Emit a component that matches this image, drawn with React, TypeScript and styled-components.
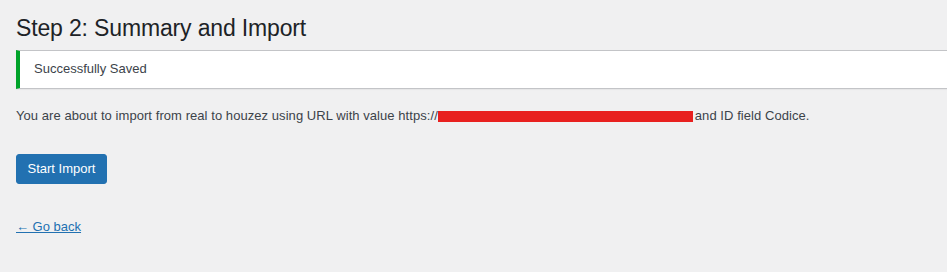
import React from "react";
import styled, { createGlobalStyle } from "styled-components";

const Global = createGlobalStyle`
  html, body { margin: 0; padding: 0; background: #f0f0f1; overflow: hidden; }
  body { font-family: "Liberation Sans", Arial, sans-serif; color: #3c434a; font-size: 13px; }
`;

const Wrap = styled.div`
  padding: 0 0 0 16px;
  width: 960px;
`;

const Title = styled.h1`
  margin: 0;
  padding: 14px 0 6px;
  font-size: 23px;
  font-weight: 400;
  line-height: 1.3;
  letter-spacing: -0.15px;
  color: #1d2327;
`;

const Notice = styled.div`
  background: #fff;
  border: 1px solid #c3c4c7;
  border-left: 4px solid #00a32a;
  box-shadow: 0 1px 1px rgba(0, 0, 0, 0.04);
  padding: 1px 12px;
  margin: 0 0 17px;
`;

const NoticeText = styled.p`
  margin: 0.5em 0;
  padding: 2px;
  line-height: 1.4;
  font-size: 13px;
`;

const Text = styled.p`
  margin: 0;
  line-height: 1.5;
  font-size: 13px;
  letter-spacing: 0.06px;
`;

const Redacted = styled.span`
  display: inline-block;
  width: 255px;
  height: 11px;
  background: #e8201f;
  vertical-align: -2px;
  margin-right: 2px;
`;

const Button = styled.button`
  margin-top: 28px;
  display: inline-block;
  background: #2271b1;
  border: 1px solid #2271b1;
  color: #fff;
  border-radius: 3px;
  font-family: inherit;
  font-size: 13px;
  line-height: 2.15384615;
  min-height: 30px;
  padding: 0 10px 0 10px;
  width: 91px;
  cursor: pointer;
`;

const Back = styled.a`
  display: inline-block;
  margin-top: 35px;
  color: #2271b1;
  text-decoration: underline;
  font-size: 13px;
`;

export default function App() {
  return (
    <>
      <Global />
      <Wrap>
        <Title>Step 2: Summary and Import</Title>
        <Notice>
          <NoticeText>Successfully Saved</NoticeText>
        </Notice>
        <Text>
          You are about to import from real to houzez using URL with value https://
          <Redacted aria-hidden="true" />
          and ID field Codice.
        </Text>
        <div>
          <Button type="button">Start Import</Button>
        </div>
        <div>
          <Back href="#">← Go back</Back>
        </div>
      </Wrap>
    </>
  );
}
